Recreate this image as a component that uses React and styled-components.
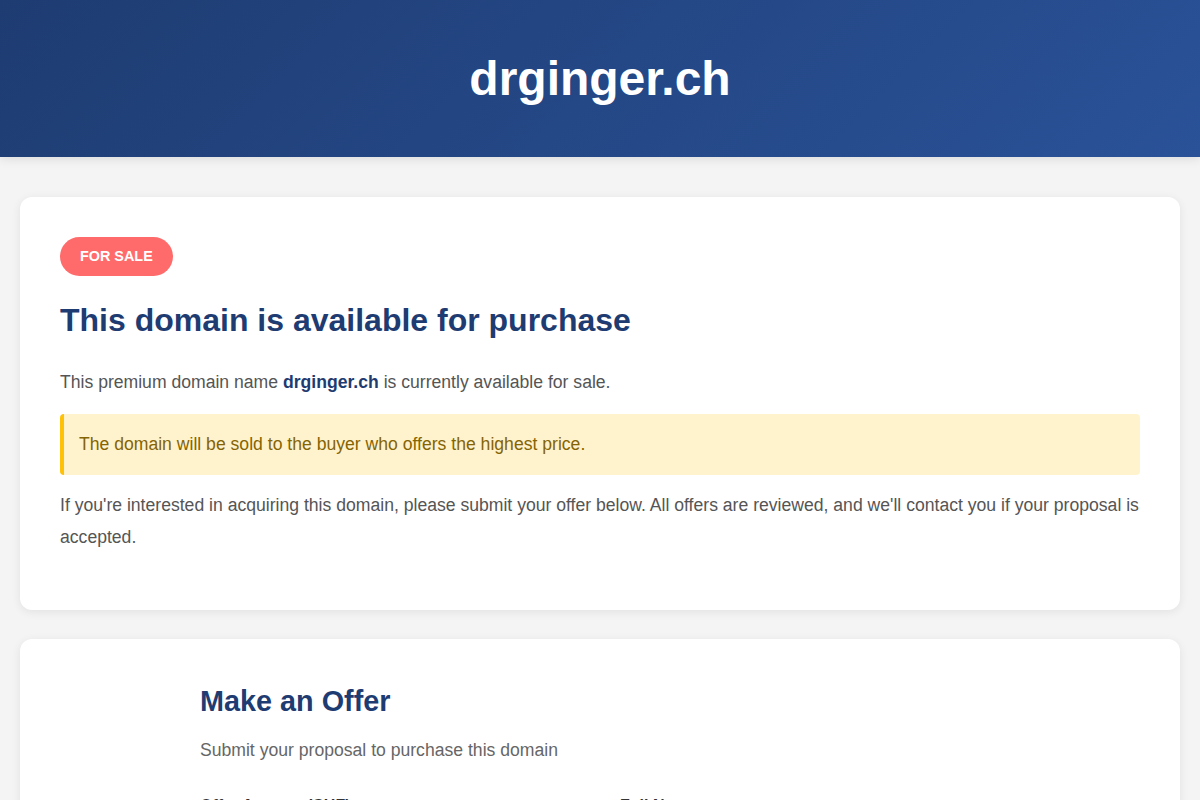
import React from "react";
import styled, { createGlobalStyle } from "styled-components";

const Global = createGlobalStyle`
  * { box-sizing: border-box; }
  html, body { margin: 0; padding: 0; }
  body {
    font-family: "Liberation Sans", Arial, sans-serif;
    background: #f4f4f4;
    color: #333;
  }
`;

const Header = styled.header`
  background: linear-gradient(135deg, #1e3c72 0%, #2a5298 100%);
  padding: 51px 20px 50px;
  text-align: center;
  box-shadow: 0 2px 10px rgba(0, 0, 0, 0.1);
`;

const SiteTitle = styled.h1`
  margin: 0;
  color: #fff;
  font-size: 48px;
  line-height: 56px;
  font-weight: 700;
`;

const Container = styled.main`
  padding: 40px 20px;
  display: flex;
  flex-direction: column;
  gap: 29px;
`;

const Card = styled.section`
  background: #fff;
  border-radius: 12px;
  padding: 40px;
  box-shadow: 0 2px 10px rgba(0, 0, 0, 0.08);
`;

const Badge = styled.span`
  display: inline-block;
  background: #ff6b6b;
  color: #fff;
  font-weight: 700;
  font-size: 14.4px;
  line-height: 19px;
  padding: 10px 20px;
  border-radius: 20px;
`;

const Title = styled.h2`
  margin: 26px 0 28px;
  color: #1e3c72;
  font-size: 32px;
  line-height: 37px;
  font-weight: 700;
`;

const Text = styled.p`
  margin: 0 0 ${(p) => (p.$lead ? "15px" : "16px")};
  font-size: 17.6px;
  line-height: 31.68px;
  color: #555;
`;

const Strong = styled.strong`
  color: #1e3c72;
`;

const Notice = styled.div`
  margin: 0 0 15px;
  background: #fff3cd;
  border-left: 4px solid #ffc107;
  border-radius: 4px;
  padding: 15px 15px;
  font-size: 17.6px;
  line-height: 31.68px;
  color: #856404;
`;

const Form = styled.form`
  max-width: 800px;
  margin: 0 auto;
`;

const FormTitle = styled.h2`
  margin: 6px 0 18px;
  color: #1e3c72;
  font-size: 28.8px;
  line-height: 32px;
  font-weight: 700;
`;

const Subtitle = styled.p`
  margin: 0 0 30px;
  font-size: 17.6px;
  line-height: 31.68px;
  color: #666;
`;

const Grid = styled.div`
  display: grid;
  grid-template-columns: 1fr 1fr;
  gap: 20px 40px;
`;

const Field = styled.div`
  display: flex;
  flex-direction: column;
  gap: 8px;
`;

const Label = styled.label`
  font-weight: 700;
  font-size: 16px;
  line-height: 20px;
  color: #333;
`;

const Input = styled.input`
  padding: 12px 14px;
  border: 1px solid #ddd;
  border-radius: 6px;
  font-size: 16px;
  font-family: inherit;
`;

export default function App() {
  return (
    <>
      <Global />
      <Header>
        <SiteTitle>drginger.ch</SiteTitle>
      </Header>
      <Container>
        <Card>
          <Badge>FOR SALE</Badge>
          <Title>This domain is available for purchase</Title>
          <Text $lead>
            This premium domain name <Strong>drginger.ch</Strong> is currently available for sale.
          </Text>
          <Notice>The domain will be sold to the buyer who offers the highest price.</Notice>
          <Text>
            If you're interested in acquiring this domain, please submit your offer below. All
            offers are reviewed, and we'll contact you if your proposal is accepted.
          </Text>
        </Card>
        <Card>
          <Form onSubmit={(e) => e.preventDefault()}>
            <FormTitle>Make an Offer</FormTitle>
            <Subtitle>Submit your proposal to purchase this domain</Subtitle>
            <Grid>
              <Field>
                <Label>Offer Amount (CHF)</Label>
                <Input type="text" />
              </Field>
              <Field>
                <Label>Full Name</Label>
                <Input type="text" />
              </Field>
              <Field>
                <Label>Email Address</Label>
                <Input type="email" />
              </Field>
              <Field>
                <Label>Phone</Label>
                <Input type="tel" />
              </Field>
            </Grid>
          </Form>
        </Card>
      </Container>
    </>
  );
}
